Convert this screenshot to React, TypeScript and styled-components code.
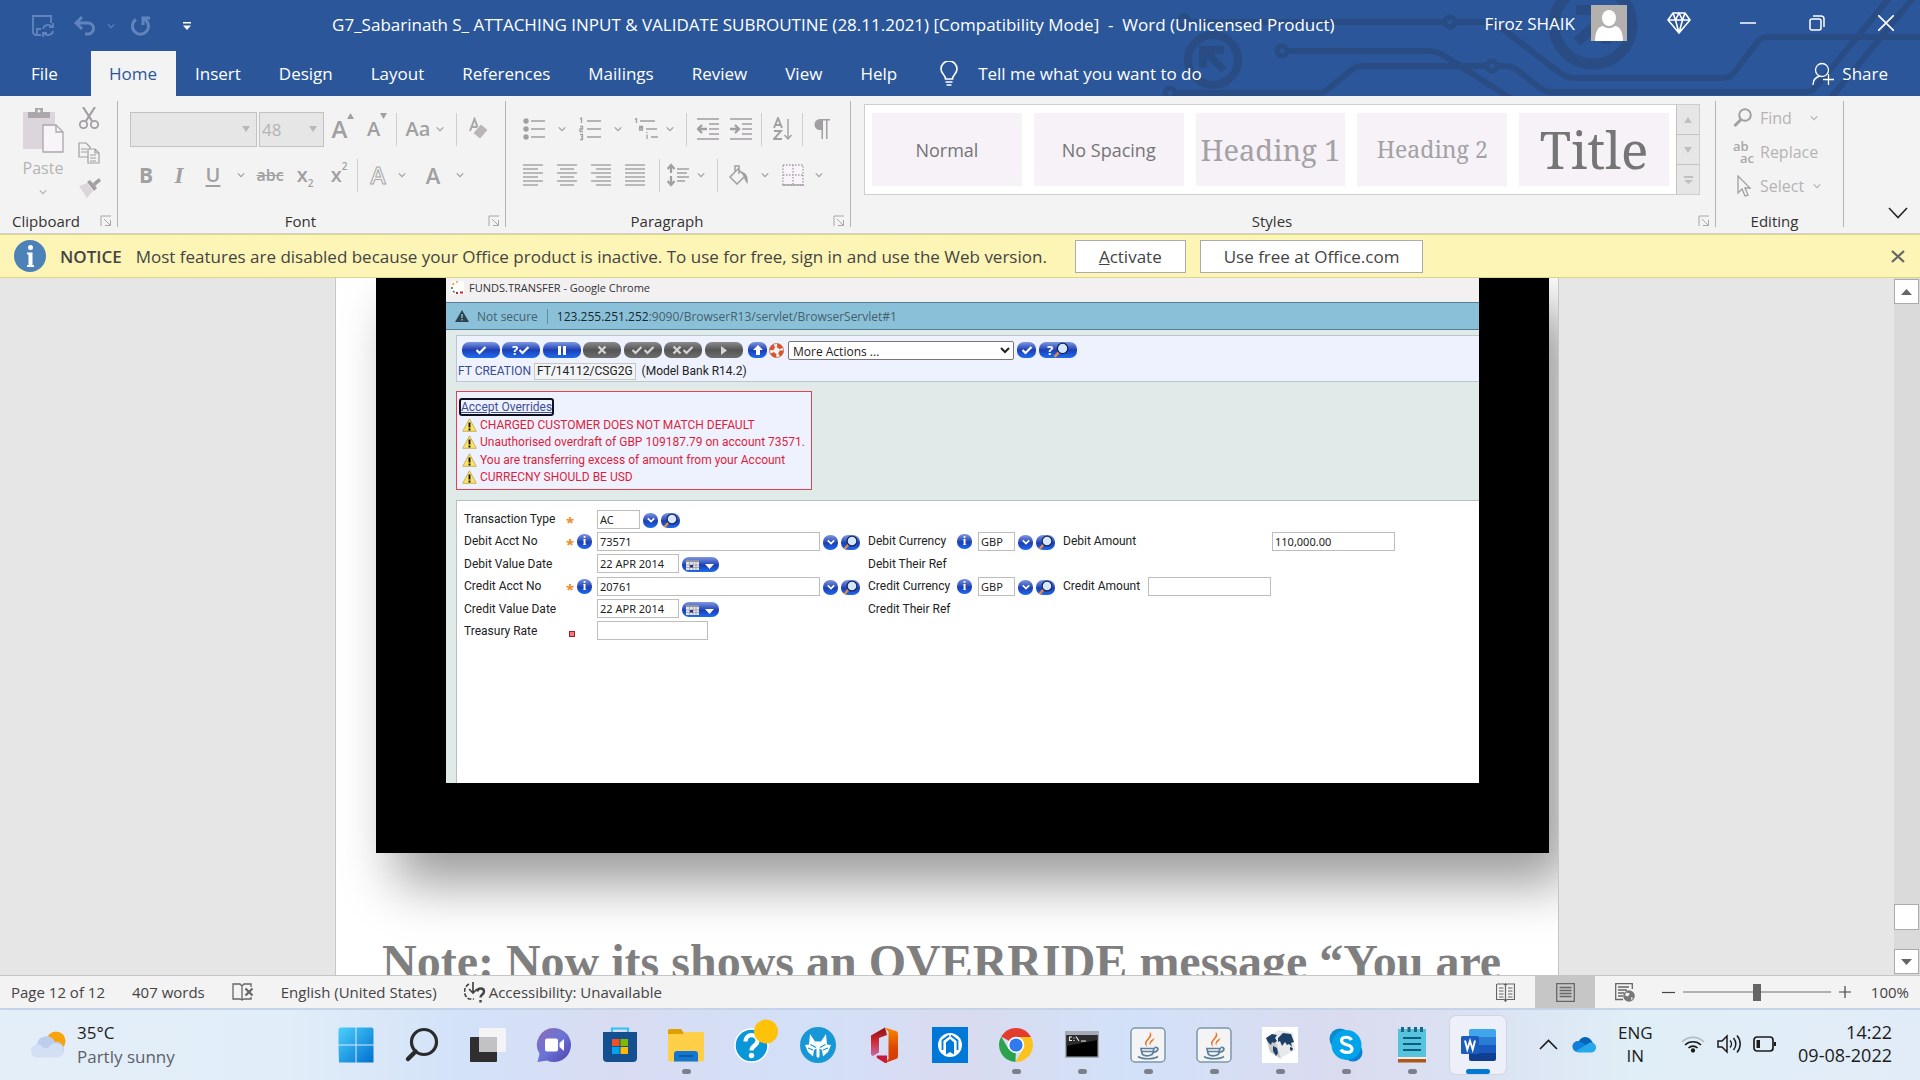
import React from "react";
import styled, { createGlobalStyle } from "styled-components";

const UI = `"Open Sans", "Noto Sans", sans-serif`;
const BANK = `Roboto, "Open Sans", sans-serif`;

const GlobalStyle = createGlobalStyle`
  *, *::before, *::after { box-sizing: border-box; }
  html, body { margin: 0; padding: 0; }
  body { font-family: ${UI}; color: #262626; overflow: hidden; }
  button, input, select { font: inherit; color: inherit; margin: 0; }
  button { border: 0; background: none; padding: 0; cursor: pointer; }
  svg { display: block; flex: none; }
`;

const Shell = styled.div`
  display: flex;
  flex-direction: column;
  height: 100vh;
`;

/* ---------- header ---------- */
const Header = styled.header`
  position: relative;
  flex: none;
  background: #2b579a;
  color: #fff;
  overflow: hidden;
`;
const Circuit = styled.svg`
  position: absolute;
  top: 0;
  right: 0;
`;
const TitleBar = styled.div`
  position: relative;
  display: flex;
  height: 51px;
`;
const QuickAccess = styled.div`
  display: flex;
  align-items: center;
  width: 202px;
  padding-left: 32px;
  color: #6284bd;
`;
const QuickButton = styled.button<{ $gap: number; $bright?: boolean }>`
  margin-right: ${(p) => p.$gap}px;
  color: ${(p) => (p.$bright ? "#fff" : "inherit")};
`;
const DocTitle = styled.h1`
  flex: 1;
  margin: 0;
  padding-right: 20px;
  font-size: 17px;
  font-weight: 400;
  line-height: 50px;
  text-align: center;
  white-space: pre;
`;
const Account = styled.div`
  display: flex;
  align-items: center;
  gap: 16px;
  height: 46px;
  margin-right: 17px;
  font-size: 17px;
`;
const WindowButtons = styled.div`
  display: flex;
  height: 46px;
`;
const WindowButton = styled.button`
  display: grid;
  place-items: center;
  width: 69px;
  color: #fff;
`;
const TabRow = styled.nav`
  position: relative;
  display: flex;
  height: 45px;
  font-size: 17px;
`;
const Tab = styled.button<{ $active?: boolean; $file?: boolean }>`
  padding: 0 ${(p) => (p.$file ? 33 : 19)}px 0 ${(p) => (p.$file ? 31 : p.$active ? 18 : 19)}px;
  background: ${(p) => (p.$active ? "#f3f3f3" : "transparent")};
  color: ${(p) => (p.$active ? "#2b579a" : "#fff")};
`;
const TellMe = styled.button`
  display: flex;
  align-items: center;
  gap: 20px;
  margin-left: 24px;
  color: #fff;
`;
const Share = styled(TellMe)`
  gap: 8px;
  margin: 0 32px 0 auto;
`;

/* ---------- ribbon ---------- */
const Ribbon = styled.section`
  display: flex;
  flex: none;
  height: 138px;
  padding: 5px 0 6px;
  background: #f3f3f3;
  border-bottom: 1px solid #d2d0d0;
  color: #a19fa1;
`;
const Group = styled.div<{ $width?: number }>`
  display: flex;
  flex-direction: column;
  flex: ${(p) => (p.$width ? "none" : "1")};
  width: ${(p) => (p.$width ? `${p.$width}px` : "auto")};
  border-right: 1px solid #b5b3b3;
`;
const GroupBody = styled.div<{ $pad?: string }>`
  flex: 1;
  padding: ${(p) => p.$pad ?? "0"};
`;
const GroupFoot = styled.div`
  display: flex;
  align-items: center;
  height: 20px;
  margin-bottom: -4px;
  padding-right: 5px;
  font-size: 15px;
  color: #333;
`;
const GroupLabel = styled.span<{ $left?: boolean }>`
  flex: 1;
  padding: ${(p) => (p.$left ? "0 0 0 12px" : "0 5px 0 0")};
  text-align: ${(p) => (p.$left ? "left" : "center")};
`;
const ToolRow = styled.div<{ $gap?: number }>`
  display: flex;
  align-items: center;
  height: 34px;
  margin-bottom: ${(p) => p.$gap ?? 0}px;
`;
const Tool = styled.button<{ $w: number; $start?: boolean }>`
  display: flex;
  align-items: center;
  justify-content: ${(p) => (p.$start ? "flex-start" : "center")};
  flex: none;
  width: ${(p) => p.$w}px;
  height: 32px;
`;
const Divider = styled.span<{ $l: number; $r: number }>`
  flex: none;
  width: 1px;
  height: 33px;
  margin: 0 ${(p) => p.$r}px 0 ${(p) => p.$l}px;
  background: #cfcdcd;
`;
const Combo = styled.div<{ $w: number }>`
  display: flex;
  align-items: center;
  width: ${(p) => p.$w}px;
  height: 35px;
  margin-right: 2px;
  padding-right: 6px;
  background: #e6e6e6;
  border: 1px solid #c3c1c1;
  color: #b9b7b9;
`;
const ComboInput = styled.input`
  flex: 1;
  min-width: 0;
  padding: 0 0 0 2px;
  border: 0;
  outline: 0;
  background: none;
  font-size: 17px;
  color: #b5b3b3;
`;
const Glyph = styled.span<{ $size: number; $bold?: boolean; $italic?: boolean; $under?: boolean; $strike?: boolean; $serif?: boolean; $hollow?: boolean }>`
  font-family: ${(p) => (p.$serif ? `"Liberation Serif", serif` : UI)};
  font-size: ${(p) => p.$size}px;
  line-height: 1;
  font-weight: ${(p) => (p.$bold ? 700 : 600)};
  font-style: ${(p) => (p.$italic ? "italic" : "normal")};
  text-decoration: ${(p) => (p.$under ? "underline" : p.$strike ? "line-through" : "none")};
  text-underline-offset: 3px;
  -webkit-text-stroke: ${(p) => (p.$hollow ? "1px #a9a7a9" : "0")};
  color: ${(p) => (p.$hollow ? "#f3f3f3" : "inherit")};
`;
const Small = styled.span<{ $up?: boolean }>`
  align-self: ${(p) => (p.$up ? "flex-start" : "flex-end")};
  margin-bottom: ${(p) => (p.$up ? 0 : 1)}px;
  font-size: 10px;
  line-height: 14px;
  font-weight: 600;
`;
const ClipBody = styled.div`
  display: flex;
  flex: 1;
  padding: 6px 0 0 20px;
`;
const PasteButton = styled.button`
  display: flex;
  flex-direction: column;
  align-items: center;
  width: 46px;
  margin-right: 12px;
  font-size: 16px;
  line-height: 24px;
  color: #b5b3b3;
`;
const PasteLabel = styled.span`
  margin: 3px 0 8px;
`;
const ClipTools = styled.div`
  display: flex;
  flex-direction: column;
  gap: 13px;
`;
const Gallery = styled.div`
  display: flex;
  height: 91px;
  margin: 3px 15px 0 13px;
  background: #fff;
  border: 1px solid #cfcdcd;
`;
const Cards = styled.div`
  display: flex;
  flex: 1;
  gap: 12px;
  padding: 8px 7px;
`;
const Card = styled.button<{ $size: number; $serif?: boolean; $dark?: boolean }>`
  flex: 1;
  min-width: 0;
  background: #f6f2f8;
  font-family: ${(p) => (p.$serif ? `"Noto Serif", "DejaVu Serif Condensed", "Liberation Serif", serif` : UI)};
  font-size: ${(p) => p.$size}px;
  line-height: 1;
  white-space: nowrap;
  color: ${(p) => (p.$dark ? "#757575" : "#a3a1a3")};
`;
const GalleryScroll = styled.div`
  display: flex;
  flex-direction: column;
  width: 23px;
  border-left: 1px solid #c3c1c1;
`;
const ScrollStep = styled.button`
  flex: 1;
  display: grid;
  place-items: center;
  background: #e6e6e6;
  color: #c0bebe;
  & + & { border-top: 1px solid #c3c1c1; }
`;
const EditRow = styled.button`
  display: grid;
  grid-template-columns: 27px auto auto;
  align-items: center;
  justify-content: start;
  width: 100%;
  height: 34px;
  font-size: 16px;
  color: #b5b3b3;
  text-align: left;
`;
const EditText = styled.span<{ $w?: number }>`
  min-width: ${(p) => p.$w ?? 0}px;
`;
const SwapGlyph = styled.span`
  display: flex;
  flex-direction: column;
  font-size: 13px;
  font-weight: 600;
  line-height: 12px;
  color: #a9a7a9;
`;
const SwapLine = styled.span<{ $in?: boolean }>`
  padding-left: ${(p) => (p.$in ? 7 : 0)}px;
`;
const RibbonEnd = styled.div`
  display: flex;
  align-items: flex-end;
  justify-content: flex-end;
  width: 76px;
  padding: 0 12px 8px 0;
  color: #262626;
`;

/* ---------- notice ---------- */
const Notice = styled.section`
  display: flex;
  align-items: center;
  flex: none;
  height: 44px;
  padding: 0 15px 0 14px;
  background: #fcf5b5;
  border-top: 1px solid #dcd68c;
  border-bottom: 1px solid #dcd68c;
  font-size: 17px;
  color: #444;
`;
const NoticeTitle = styled.strong`
  margin: 0 14px;
  font-weight: 600;
`;
const NoticeText = styled.span`
  margin-right: 28px;
`;
const NoticeButton = styled.button`
  height: 33px;
  margin-right: 14px;
  padding: 0 23px;
  background: #fff;
  border: 1px solid #ababab;
  white-space: nowrap;
`;
const NoticeClose = styled.button`
  margin-left: auto;
  color: #666;
`;

/* ---------- document ---------- */
const Workspace = styled.main`
  display: flex;
  flex: 1;
  min-height: 0;
  background: #e6e6e6;
`;
const Canvas = styled.div`
  display: flex;
  justify-content: center;
  flex: 1;
  min-width: 0;
  overflow: hidden;
`;
const Sheet = styled.article`
  flex: none;
  width: 1224px;
  padding-left: 40px;
  background: #fff;
  border: solid #c6c6c6;
  border-width: 0 1px;
  overflow: hidden;
`;
const Picture = styled.div`
  width: 1173px;
  padding: 0 70px 70px;
  background: #000;
  box-shadow: 20px 30px 50px rgba(0, 0, 0, 0.4);
`;
const NoteText = styled.p`
  margin: 81px 0 0 6px;
  font-family: "Liberation Serif", "Times New Roman", serif;
  font-size: 48px;
  font-weight: 700;
  line-height: 56px;
  color: #7f7f7f;
  white-space: nowrap;
`;
const ScrollTrack = styled.div`
  display: flex;
  flex-direction: column;
  width: 26px;
  padding: 1px 1px 1px 0;
  background: #dadada;
`;
const TrackButton = styled.button`
  display: grid;
  place-items: center;
  height: 25px;
  background: #fff;
  border: 1px solid #ababab;
  color: #666;
`;
const TrackSpace = styled.div`
  flex: 1;
`;
const Thumb = styled.div`
  height: 26px;
  margin-bottom: 19px;
  background: #fff;
  border: 1px solid #ababab;
`;

/* ---------- banking window ---------- */
const Browser = styled.div`
  height: 505px;
  display: flex;
  flex-direction: column;
  background: #e0eae8;
  font-family: ${BANK};
  font-size: 12px;
  color: #222;
  white-space: nowrap;
`;
const BrowserTitle = styled.div`
  display: flex;
  align-items: center;
  gap: 5px;
  height: 24px;
  padding: 0 0 6px 5px;
  background: #f2f0f0;
  font-family: ${UI};
  font-size: 11px;
  color: #333;
`;
const AddressBar = styled.div`
  display: flex;
  align-items: center;
  height: 28px;
  padding-left: 9px;
  background: #8bc1d8;
  border: solid #517f97;
  border-width: 1px 0;
  font-family: ${UI};
  font-size: 12px;
  color: #44606d;
`;
const Secure = styled.span`
  margin-left: 8px;
  padding-right: 9px;
  border-right: 1px solid #5f8ea4;
  line-height: 15px;
`;
const Url = styled.span`
  margin-left: 9px;
`;
const UrlHost = styled.span`
  color: #16262e;
`;
const ActionPanel = styled.div`
  margin: 5px 0 0 10px;
  height: 47px;
  padding: 4px 0 0 5px;
  background: #eef2ff;
  border: 1px solid #bcc6ce;
  border-right: 0;
`;
const ActionRow = styled.div`
  display: flex;
  align-items: center;
  height: 20px;
`;
const Pill = styled.button<{ $w: number; $grey?: boolean; $gap?: number }>`
  display: flex;
  align-items: center;
  justify-content: center;
  flex: none;
  width: ${(p) => p.$w}px;
  height: 16px;
  margin-right: ${(p) => p.$gap ?? 2}px;
  border-radius: 7px;
  background: ${(p) =>
    p.$grey
      ? "linear-gradient(#8b8b8b, #555 50%, #6e6e6e)"
      : "linear-gradient(#7f97e0, #1c3fb4 50%, #1f6cf0)"};
  color: ${(p) => (p.$grey ? "#d5d5d5" : "#fff")};
`;
const Actions = styled.select`
  width: 226px;
  height: 19px;
  margin: 0 3px 0 4px;
  padding: 0;
  background: #fff;
  border: 1px solid #767676;
  border-radius: 2px;
  font-family: ${UI};
  font-size: 12px;
  line-height: 16px;
`;
const RecordRow = styled.div`
  display: flex;
  align-items: center;
  height: 18px;
  margin: 2px 0 0 -4px;
`;
const RecordType = styled.span`
  width: 76px;
  color: #3b4d8c;
`;
const RecordId = styled.span`
  margin-right: 6px;
  padding: 0 2px;
  line-height: 15px;
  border: 1px solid #c8c8c0;
  background: #f3f4f6;
`;
const Overrides = styled.div`
  align-self: flex-start;
  width: 356px;
  height: 99px;
  margin: 9px 0 10px 10px;
  padding: 6px 0 0 2px;
  background: #eef2ff;
  border: 1px solid #e04450;
  color: #dc1f3c;
`;
const AcceptLink = styled.a`
  display: block;
  width: fit-content;
  border: 2px solid #101020;
  border-radius: 3px;
  line-height: 14px;
  color: #3d4f94;
`;
const WarnList = styled.ul`
  display: flex;
  flex-direction: column;
  justify-content: space-between;
  height: 70px;
  margin: 0;
  padding: 0 0 0 3px;
  list-style: none;
`;
const WarnItem = styled.li`
  display: flex;
  align-items: center;
  gap: 3px;
  height: 17px;
`;
const FormPanel = styled.form`
  flex: 1;
  margin-left: 10px;
  padding: 7px 0 0 7px;
  background: #fff;
  border: solid #b6bebe;
  border-width: 1px 0 0 1px;
`;
const FormRows = styled.div`
  display: flex;
  flex-direction: column;
  justify-content: space-between;
  height: 134px;
`;
const FormRow = styled.div`
  display: flex;
  height: 22px;
  align-items: center;
`;
const Cell = styled.span<{ $w: number }>`
  display: flex;
  align-items: center;
  flex: none;
  gap: 3px;
  width: ${(p) => p.$w}px;
`;
const FieldLabel = styled.label<{ $w: number }>`
  flex: none;
  width: ${(p) => p.$w}px;
`;
const Field = styled.input<{ $w: number; $indent?: number }>`
  flex: none;
  width: ${(p) => p.$w}px;
  height: 19px;
  margin-left: ${(p) => p.$indent ?? 0}px;
  padding: 0 2px;
  border: 1px solid #bdbdbd;
  background: #fff;
  font-family: "Noto Sans", sans-serif;
  font-size: 11px;
`;
const Star = styled.span`
  width: 8px;
  padding-top: 5px;
  font-family: ${UI};
  font-weight: 700;
  font-size: 15px;
  line-height: 12px;
  color: #f08a1c;
`;
const RequiredDot = styled.span`
  width: 6px;
  height: 6px;
  margin: 6px 0 0 3px;
  border: 1px solid #a61c24;
  background: #f27a80;
`;
const RoundButton = styled.button<{ $w?: number }>`
  display: grid;
  place-items: center;
  flex: none;
  width: ${(p) => p.$w ?? 15}px;
  height: 15px;
  margin-top: 2px;
  border-radius: 7px;
  background: linear-gradient(#7f97e0, #1c3fb4 55%, #1f6cf0);
  color: #fff;
`;
const Info = styled(RoundButton)`
  margin-top: 0;
  font: 700 12px "Liberation Serif", serif;
`;

/* ---------- status bar ---------- */
const StatusBar = styled.footer`
  display: flex;
  align-items: center;
  flex: none;
  height: 33px;
  padding: 0 11px;
  background: #f3f3f3;
  border-top: 1px solid #c6c6c6;
  font-size: 15px;
  color: #444;
  white-space: nowrap;
`;
const StatusItem = styled.button`
  display: flex;
  align-items: center;
  gap: 3px;
  margin-right: 27px;
`;
const StatusRight = styled.div`
  display: flex;
  align-items: center;
  align-self: stretch;
  margin-left: auto;
`;
const ViewButton = styled.button<{ $active?: boolean }>`
  display: grid;
  place-items: center;
  width: 60px;
  height: 32px;
  background: ${(p) => (p.$active ? "#c6c6c6" : "transparent")};
  color: #666;
`;
const ZoomSlider = styled.input`
  appearance: none;
  width: 148px;
  height: 18px;
  margin: 0 8px;
  background: linear-gradient(#b0b0b0, #b0b0b0) center / 100% 2px no-repeat;
  &::-webkit-slider-thumb {
    appearance: none;
    width: 8px;
    height: 17px;
    background: #666;
  }
`;
const ZoomButton = styled.button<{ $l?: number }>`
  margin-left: ${(p) => p.$l ?? 0}px;
`;
const ZoomValue = styled.span`
  width: 58px;
  text-align: right;
`;

/* ---------- taskbar ---------- */
const Taskbar = styled.nav`
  display: grid;
  grid-template-columns: 323px 1fr 409px;
  flex: none;
  height: 72px;
  border-top: 2px solid #c5d3e8;
  background: linear-gradient(90deg, #e3eef8 0, #e1edf8 15%, #d3e2f9 24%, #d8dcf2 32%, #d3e0f8 42%, #d9dbf0 50%, #d2e1f8 59%, #dadbef 70%, #dbe3f3 78%, #e0eef7 85%, #e2ecf8 100%);
  color: #1c1c1c;
`;
const Weather = styled.button`
  display: flex;
  align-items: center;
  gap: 11px;
  padding: 0 0 0 30px;
  text-align: left;
  font-size: 17px;
  line-height: 24px;
`;
const Muted = styled.span`
  display: block;
  color: #5d6166;
`;
const Apps = styled.div`
  display: flex;
  justify-content: center;
`;
const AppSlot = styled.button<{ $active?: boolean }>`
  display: flex;
  flex-direction: column;
  align-items: center;
  justify-content: space-between;
  width: 56px;
  height: 58px;
  margin: 6px 5px 0;
  padding-top: 11px;
  border-radius: 6px;
  background: ${(p) => (p.$active ? "#eef0f9" : "transparent")};
  box-shadow: ${(p) => (p.$active ? "0 0 0 1px #d0d5e4" : "none")};
`;
const AppIcon = styled.span`
  display: grid;
  place-items: center;
  width: 36px;
  height: 36px;
`;
const HelpArt = styled.svg`
  overflow: visible;
`;
const Running = styled.span<{ $on?: boolean; $active?: boolean }>`
  width: ${(p) => (p.$active ? 24 : 9)}px;
  height: 5px;
  border-radius: 3px;
  background: ${(p) => (p.$active ? "#0078d4" : p.$on ? "#7c808c" : "transparent")};
`;
const Tray = styled.div`
  display: flex;
  align-items: center;
  padding: 0 28px 2px 0;
  font-size: 17px;
  line-height: 23px;
`;
const TrayItem = styled.button<{ $l: number }>`
  margin-left: ${(p) => p.$l}px;
  text-align: center;
`;
const Clock = styled.button`
  margin-left: auto;
  font-size: 18px;
  text-align: right;
`;

/* ---------- icons ---------- */
const Chev = ({ s = 9, w = 1.5 }: { s?: number; w?: number }) => (
  <svg width={s} height={s} viewBox="0 0 10 10" fill="none" stroke="currentColor" strokeWidth={w}>
    <path d="M1 3l4 4 4-4" />
  </svg>
);
const Tri = ({ up, w = 9 }: { up?: boolean; w?: number }) => (
  <svg width={w} height="6" viewBox="0 0 10 6" preserveAspectRatio="none" fill="currentColor">
    <path d={up ? "M0 6L5 0l5 6z" : "M0 0l5 6 5-6z"} />
  </svg>
);
const Lines = ({ rows, w = 21, h = 22 }: { rows: [number, number, number][]; w?: number; h?: number }) => (
  <svg width={w} height={h} viewBox={`0 0 ${w} ${h}`} stroke="currentColor" strokeWidth="1.4">
    {rows.map(([y, a, b], i) => (
      <path key={i} d={`M${a} ${y}H${b}`} />
    ))}
  </svg>
);
const alignRows = (kind: string): [number, number, number][] =>
  [1, 5, 9, 13, 17, 21].map((y, i) => {
    const short = i % 2 === 1;
    if (kind === "j" || !short) return [y, 0, 20];
    if (kind === "l") return [y, 0, 15];
    if (kind === "c") return [y, 3, 17];
    return [y, 5, 20];
  });
const Launcher = () => (
  <svg width="12" height="12" viewBox="0 0 12 12" fill="none" stroke="#a8a6a6">
    <path d="M1 11V1h10M4 4l6 6M10.500 5v5.500H5" />
  </svg>
);
const Foot = ({ children, left }: { children: string; left?: boolean }) => (
  <GroupFoot>
    <GroupLabel $left={left}>{children}</GroupLabel>
    <button aria-label={`${children} settings`}>
      <Launcher />
    </button>
  </GroupFoot>
);
const Check = () => (
  <svg width="12" height="10" viewBox="0 0 12 10" fill="none" stroke="currentColor" strokeWidth="2.200">
    <path d="M1.500 5l3 3L10.500 2" />
  </svg>
);
const Cross = () => (
  <svg width="10" height="10" viewBox="0 0 10 10" fill="none" stroke="currentColor" strokeWidth="2.200">
    <path d="M1.500 1.500l7 7M8.500 1.500l-7 7" />
  </svg>
);
const Query = styled.span`
  font: 700 13px ${UI};
  line-height: 14px;
`;
const Lens = ({ s = 15 }: { s?: number }) => (
  <svg width={s} height={s} viewBox="0 0 15 15">
    <path d="M6 9L1.500 14" stroke="#e08b4a" strokeWidth="2.500" />
    <circle cx="9" cy="6" r="4.900" fill="#d6e7fc" stroke="#10235c" strokeWidth="1.200" />
  </svg>
);
const DownRound = () => (
  <RoundButton type="button" aria-label="Open list">
    <Chev s={8} w={2} />
  </RoundButton>
);
const LensRound = () => (
  <RoundButton type="button" $w={19} aria-label="Search">
    <Lens />
  </RoundButton>
);
const CalendarRound = () => (
  <RoundButton type="button" $w={37} aria-label="Pick date">
    <svg width="31" height="12" viewBox="0 0 31 12">
      <path d="M1 1h13v10H1z" fill="#e6e6e6" />
      <path d="M1 1h13v2H1z" fill="#8e94a5" />
      <path d="M4.500 3v8M8 3v8M11 3v8M1 6h13M1 8.500h13" stroke="#9a9aa4" strokeWidth=".8" />
      <path d="M5 6h3v2.500H5z" fill="#24368c" />
      <path d="M20 5h9l-4.500 5z" fill="#fff" />
    </svg>
  </RoundButton>
);
const Warn = () => (
  <svg width="15" height="14" viewBox="0 0 15 14">
    <path d="M7.500 .8L14.300 13.300H.7z" fill="#fbe36a" stroke="#c9b25a" />
    <path d="M7.500 4.500v5M7.500 10.500v2" stroke="#111" strokeWidth="1.900" />
  </svg>
);

const CircuitArt = () => (
  <Circuit width="760" height="96" viewBox="1160 0 760 96" fill="none" stroke="#294c85" strokeWidth="6" aria-hidden="true">
    <path d="M1190 22H1443M1457 22H1482Q1496 22 1508 33L1556 70Q1566 78 1574 78H1722Q1731 78 1736 70L1756 44Q1760 37 1768 37H1920" />
    <path d="M1289 51H1428Q1438 51 1446 57L1512 99" />
    <path d="M1177 93H1318Q1325 93 1332 86L1350 71Q1356 66 1362 66H1485M1499 66H1506Q1514 66 1521 73L1540 88Q1546 92 1552 92H1806Q1812 92 1816 87L1890-3M1830 99L1918-8" />
    <g strokeWidth="5">
      <circle cx="1184" cy="21" r="5" />
      <circle cx="1450" cy="22" r="5" />
      <circle cx="1282" cy="51" r="5" />
      <circle cx="1492" cy="66" r="5" />
      <circle cx="1170" cy="93" r="5" />
    </g>
    <circle cx="1213" cy="60" r="25" strokeWidth="8" />
    <path d="M1224 50H1203V68M1205 51L1224 70" strokeWidth="8" />
    <circle cx="1593" cy="25" r="39" strokeWidth="11" />
    <path d="M1576 10H1612M1577 42L1610 12M1606 8V44" strokeWidth="10" />
  </Circuit>
);

const JavaIcon = () => (
  <svg width="36" height="36" viewBox="0 0 36 36">
    <rect x="1" y="1" width="34" height="34" rx="4" fill="#f4f4f4" stroke="#7b97ad" strokeWidth="1.500" />
    <path d="M17.500 20C10 14 22 12 19.500 4.500 26 11 13 13 17.500 20zM20.500 19c-3-4 1-6 4-8-1 4-5 4-4 8z" fill="#e8762c" />
    <path d="M11 21.500h13c-1 3-.5 4-2 6-3 1.500-7 1.500-9.500 0-1-2-1-4-1.500-6zM12 24.500h11" fill="none" stroke="#5d7f9c" strokeWidth="1.700" />
    <path d="M24.500 20.500c5-1 4.500 4-1.500 5M8 29.500c4 3 16 3 20 0" fill="none" stroke="#5d7f9c" strokeWidth="1.700" />
  </svg>
);

const apps: { name: string; on?: boolean; active?: boolean; icon: React.ReactNode }[] = [
  {
    name: "Start",
    icon: (
      <svg width="36" height="36" viewBox="0 0 36 36">
        <defs>
          <linearGradient id="win" x1="0" y1="0" x2="1" y2="1">
            <stop offset="0" stopColor="#4cd0fb" />
            <stop offset="1" stopColor="#0070d0" />
          </linearGradient>
        </defs>
        <path d="M2 .5h15.500v17H.5V2zM18.500.5H34L35.500 2v15.500h-17zM.5 18.500h17v17H1zM18.500 18.500h17V35l-.5.500H18.500z" fill="url(#win)" />
      </svg>
    ),
  },
  {
    name: "Search",
    icon: (
      <svg width="36" height="36" viewBox="0 0 36 36" fill="none" stroke="#2b2b2b">
        <circle cx="20" cy="15" r="12.500" strokeWidth="3.200" />
        <path d="M11.500 24.500L4 32" strokeWidth="4.500" strokeLinecap="round" />
      </svg>
    ),
  },
  {
    name: "Task view",
    icon: (
      <svg width="36" height="36" viewBox="0 0 36 36">
        <rect x="0" y="10" width="27" height="25" rx="1" fill="#2f2f2f" />
        <rect x="9" y="1" width="27" height="24" rx="1" fill="#f4f4f6" />
        <path d="M9 10h18v15H9z" fill="#c2c2c4" />
      </svg>
    ),
  },
  {
    name: "Chat",
    icon: (
      <svg width="36" height="36" viewBox="0 0 36 36">
        <defs>
          <linearGradient id="chat" x1="0" y1="0" x2="1" y2="1">
            <stop offset="0" stopColor="#8d6db4" />
            <stop offset=".5" stopColor="#6a74d6" />
            <stop offset="1" stopColor="#4b3fae" />
          </linearGradient>
        </defs>
        <path d="M18 1a17 17 0 1 1-7 32.500L1.500 35l2-8A17 17 0 0 1 18 1z" fill="url(#chat)" />
        <rect x="9" y="11.500" width="13" height="13" rx="2" fill="#fff" />
        <path d="M23.500 16l4.500-4v12l-4.500-4z" fill="#fff" />
      </svg>
    ),
  },
  {
    name: "Store",
    icon: (
      <svg width="36" height="36" viewBox="0 0 36 36">
        <path d="M10 7V1.500h16V7" fill="none" stroke="#35c0f2" strokeWidth="2.200" />
        <path d="M1 5h34v26a4 4 0 0 1-4 4H5a4 4 0 0 1-4-4z" fill="#14508f" />
        <path d="M10 12h7.500v7H10z" fill="#f25022" />
        <path d="M18.500 12H26v7h-7.500z" fill="#7fba00" />
        <path d="M10 20h7.500v7H10z" fill="#00a4ef" />
        <path d="M18.500 20H26v7h-7.500z" fill="#ffb900" />
      </svg>
    ),
  },
  {
    name: "File Explorer",
    on: true,
    icon: (
      <svg width="36" height="36" viewBox="0 0 36 36">
        <path d="M0 3.500A1.500 1.500 0 0 1 1.500 2H13l3 4-3 4H0z" fill="#e0a000" />
        <path d="M0 7h15l2-2h19v28a1.500 1.500 0 0 1-1.500 1.500h-33A1.500 1.500 0 0 1 0 33z" fill="#ffcf48" />
        <path d="M6 34.500V27a3 3 0 0 1 3-3h18a3 3 0 0 1 3 3v7.500z" fill="#1377d2" />
        <path d="M11 29h14" stroke="#0b4f95" strokeWidth="1.500" />
      </svg>
    ),
  },
  {
    name: "Get Help",
    icon: (
      <HelpArt width="36" height="36" viewBox="0 0 36 36">
        <circle cx="17.500" cy="18.500" r="16.500" fill="#0a97d9" stroke="#fff" strokeWidth="1.500" />
        <path d="M11.500 14.500c0-8.500 12-8 12-1 0 5.500-6 5-6 10" fill="none" stroke="#fff" strokeWidth="4.200" />
        <circle cx="17.500" cy="28.500" r="2.700" fill="#fff" />
        <circle cx="32" cy="4.500" r="12" fill="#ffc20a" />
      </HelpArt>
    ),
  },
  {
    name: "Wolf",
    icon: (
      <svg width="36" height="36" viewBox="0 0 36 36">
        <circle cx="18" cy="18" r="18" fill="#1797d6" />
        <path d="M10 7l5 7.500h6L26 7l1 10.500 4 .5-3 7-5 4.500-1-6.500-2.500-1.500v8L18 31l-1.500-1.500v-8L14 23l-1 6.500L8 25l-3-7 4-.5z" fill="#fff" />
        <path d="M8 21l5 2M28 21l-5 2M10.500 17.500l5.500 3M25.500 17.500l-5.500 3" stroke="#1797d6" strokeWidth="1.200" />
      </svg>
    ),
  },
  {
    name: "Office",
    icon: (
      <svg width="36" height="36" viewBox="0 0 36 36">
        <defs>
          <linearGradient id="offl" x1="0" y1="0" x2="0" y2="1">
            <stop offset="0" stopColor="#8c0f12" />
            <stop offset=".5" stopColor="#cf2a36" />
            <stop offset="1" stopColor="#c56aa6" />
          </linearGradient>
          <linearGradient id="offr" x1="0" y1="0" x2="0" y2="1">
            <stop offset="0" stopColor="#f78a00" />
            <stop offset=".6" stopColor="#dc4400" />
            <stop offset="1" stopColor="#d33c0a" />
          </linearGradient>
        </defs>
        <path d="M5 8.500L19 .5l2 7.500-8 3v14.500L7 29q-2-.5-2-2z" fill="url(#offl)" />
        <path d="M11 28.500h10V36h-2l-8-5q-1-1.500 0-2.500z" fill="#c8193c" />
        <path d="M19 .5l11 3.500q2 .5 2 2.500v23q0 2-2 2.500L19 36l3.500-4V5z" fill="url(#offr)" />
      </svg>
    ),
  },
  {
    name: "Support",
    icon: (
      <svg width="36" height="36" viewBox="0 0 36 36">
        <path d="M0 0h36v36H0z" fill="#0078d7" />
        <circle cx="18" cy="18" r="12" fill="#fff" />
        <path d="M14 27.500V15.500L18 12l4 3.500v12L18 25z" fill="#0078d7" />
        <path d="M10.500 23V13.500L17 8.500M25.500 23V13.500L19 8.500" fill="none" stroke="#0078d7" strokeWidth="1.800" />
      </svg>
    ),
  },
  {
    name: "Chrome",
    on: true,
    icon: (
      <svg width="36" height="36" viewBox="0 0 36 36">
        <path d="M18 18L3.300 9.500A17 17 0 0 1 32.700 9.500z" fill="#e33b2e" />
        <path d="M18 18l-.5 17A17 17 0 0 1 3.300 9.500l7.300 12.700z" fill="#2ba24c" />
        <path d="M18 10h14.900A17 17 0 0 1 17.500 35l7.500-13z" fill="#fcc31e" />
        <path d="M3.300 9.500L18 10h14.900l-.2-.5" fill="#e33b2e" />
        <circle cx="18" cy="18" r="8.300" fill="#fff" />
        <circle cx="18" cy="18" r="6.600" fill="#2f7bee" />
      </svg>
    ),
  },
  {
    name: "Command Prompt",
    on: true,
    icon: (
      <svg width="36" height="36" viewBox="0 0 36 36">
        <path d="M1 4h34v27H1z" fill="#a4acb8" />
        <path d="M2.500 8h31v21.500h-31z" fill="#000" />
        <path d="M2.500 8h31v5L2.500 19z" fill="#2c2c2c" />
        <path d="M8 10H5.500v3.500H8M10 10.500v1M10 13v1M12 9.500l3 4.500M17 14h5" fill="none" stroke="#eee" strokeWidth="1.100" />
      </svg>
    ),
  },
  { name: "Java", on: true, icon: <JavaIcon /> },
  { name: "Java", on: true, icon: <JavaIcon /> },
  {
    name: "Globe",
    on: true,
    icon: (
      <svg width="36" height="36" viewBox="0 0 36 36">
        <path d="M0 0h36v36H0z" fill="#fff" />
        <path d="M4 11L17 3l14 3 2 17-14 8z" fill="#e9e9eb" />
        <path d="M4 11l10 4 5 17L8 25z" fill="#c9c9cc" />
        <path d="M4 11l6-4 5 1-2 3 2 3-3 2-2-1-1 3-3-3zM16 11l5-5 8 1 3 8-3 1 1 4-3-3-2 1-2-3-3 4-2-5-2 1zM11 19l4 2 1 5-2 3-3-5zM28 20l3 1-1 3-2-1z" fill="#1d4067" />
      </svg>
    ),
  },
  {
    name: "Skype",
    on: true,
    icon: (
      <svg width="36" height="36" viewBox="0 0 36 36">
        <circle cx="12" cy="12" r="10.500" fill="#0b8ad0" />
        <circle cx="25" cy="25" r="9.500" fill="#0a7fd8" />
        <circle cx="18.500" cy="18" r="15" fill="#00a4ea" />
        <path d="M23.500 13c-2-4-10-3.500-10 .5 0 5.500 10.500 3 10.500 8.500 0 4.500-9 4.500-11 .5" fill="none" stroke="#fff" strokeWidth="3.200" />
      </svg>
    ),
  },
  {
    name: "Notepad",
    on: true,
    icon: (
      <svg width="36" height="36" viewBox="0 0 36 36">
        <path d="M4 32h28v3.500H4z" fill="#b0561a" />
        <path d="M4 30h28v2H4z" fill="#f5ede4" />
        <path d="M4 2h28v28H4z" fill="#55c3dc" />
        <path d="M9 11h18M9 17h18M9 23h18" stroke="#0b5d80" strokeWidth="2" />
        <path d="M8.500 0v5M15 0v5M21.500 0v5M27.500 0v5" stroke="#1a6785" strokeWidth="3" />
      </svg>
    ),
  },
  {
    name: "Word",
    on: true,
    active: true,
    icon: (
      <svg width="36" height="36" viewBox="0 0 36 36">
        <path d="M9 4a2 2 0 0 1 2-2h23a2 2 0 0 1 2 2v6H9z" fill="#41a5ee" />
        <path d="M9 10h27v8H9z" fill="#2b7cd3" />
        <path d="M9 18h27v8H9z" fill="#185abd" />
        <path d="M9 26h27v6a2 2 0 0 1-2 2H11a2 2 0 0 1-2-2z" fill="#103f91" />
        <rect x="1" y="9" width="18" height="18" rx="1.500" fill="#1b5cbe" />
        <path d="M5 13.500l2.300 9 2.700-8.500 2.700 8.500 2.300-9" fill="none" stroke="#fff" strokeWidth="1.900" />
      </svg>
    ),
  },
];

const tabs = ["File", "Home", "Insert", "Design", "Layout", "References", "Mailings", "Review", "View", "Help"];
const warnings = [
  "CHARGED CUSTOMER DOES NOT MATCH DEFAULT",
  "Unauthorised overdraft of GBP 109187.79 on account 73571.",
  "You are transferring excess of amount from your Account",
  "CURRECNY SHOULD BE USD",
];

const InfoMark = () => (
  <Info type="button" aria-label="Information">
    i
  </Info>
);

const AccountRow = ({ side, account, amount, indent }: { side: string; account: string; amount: string; indent: number }) => (
  <FormRow>
    <FieldLabel $w={102} htmlFor={`${side}-acct`}>{`${side} Acct No`}</FieldLabel>
    <Cell $w={31}>
      <Star>*</Star>
      <InfoMark />
    </Cell>
    <Cell $w={271}>
      <Field id={`${side}-acct`} $w={223} defaultValue={account} />
      <DownRound />
      <LensRound />
    </Cell>
    <FieldLabel $w={89} htmlFor={`${side}-cur`}>{`${side} Currency`}</FieldLabel>
    <Cell $w={21}>
      <InfoMark />
    </Cell>
    <Cell $w={85}>
      <Field id={`${side}-cur`} $w={37} defaultValue="GBP" />
      <DownRound />
      <LensRound />
    </Cell>
    <FieldLabel $w={85} htmlFor={`${side}-amt`}>{`${side} Amount`}</FieldLabel>
    <Field id={`${side}-amt`} $w={123} $indent={indent} defaultValue={amount} />
  </FormRow>
);
const DateRow = ({ side }: { side: string }) => (
  <FormRow>
    <FieldLabel $w={133} htmlFor={`${side}-date`}>{`${side} Value Date`}</FieldLabel>
    <Cell $w={271}>
      <Field id={`${side}-date`} $w={82} defaultValue="22 APR 2014" />
      <CalendarRound />
    </Cell>
    <span>{`${side} Their Ref`}</span>
  </FormRow>
);

export default function App() {
  return (
    <Shell>
      <GlobalStyle />
      <Header>
        <CircuitArt />
        <TitleBar>
          <QuickAccess>
            <QuickButton $gap={20} aria-label="Save">
              <svg width="22" height="22" viewBox="0 0 22 22" fill="none" stroke="currentColor" strokeWidth="1.800">
                <path d="M9 20H3.500L1 18V1h18v7M5 20v-6h4" />
                <path d="M11 14a5 5 0 0 1 9-2M21 8v4h-4M21 16a5 5 0 0 1-9 2M11 22v-4h4" />
              </svg>
            </QuickButton>
            <QuickButton $gap={11} aria-label="Undo">
              <svg width="22" height="20" viewBox="0 0 22 20" fill="none" stroke="currentColor" strokeWidth="3">
                <path d="M2 7h12a5.500 5.500 0 0 1 0 11h-3M8 1L2 7l6 6" />
              </svg>
            </QuickButton>
            <QuickButton $gap={15} aria-label="Undo history">
              <Chev s={8} />
            </QuickButton>
            <QuickButton $gap={31} aria-label="Redo">
              <svg width="22" height="20" viewBox="0 0 22 20" fill="none" stroke="currentColor" strokeWidth="3">
                <path d="M6 3.500A8 8 0 1 0 14 3M13 9V2h7" />
              </svg>
            </QuickButton>
            <QuickButton $gap={0} $bright aria-label="Customize toolbar">
              <svg width="8" height="8" viewBox="0 0 8 8" fill="currentColor">
                <path d="M0 0h8v1.500H0zM0 3.500h8L4 8z" />
              </svg>
            </QuickButton>
          </QuickAccess>
          <DocTitle>{"G7_Sabarinath S_ ATTACHING INPUT & VALIDATE SUBROUTINE (28.11.2021) [Compatibility Mode]  -  Word (Unlicensed Product)"}</DocTitle>
          <Account>
            <span>Firoz SHAIK</span>
            <svg width="36" height="36" viewBox="0 0 36 36">
              <path d="M0 0h36v36H0z" fill="#b3b0ad" />
              <ellipse cx="18" cy="13" rx="7" ry="8" fill="#fff" />
              <path d="M4 36c0-10 4-15 8-15 4 3 8 3 12 0 4 0 8 5 8 15z" fill="#fff" />
            </svg>
          </Account>
          <WindowButtons>
            <WindowButton aria-label="Premium">
              <svg width="24" height="22" viewBox="0 0 24 22" fill="none" stroke="currentColor" strokeWidth="1.600">
                <path d="M6 1h12l5 7-11 13L1 8zM1 8h22M6 1l2.500 7L12 21l3.500-13L18 1M8.500 8L12 1l3.500 7" />
              </svg>
            </WindowButton>
            <WindowButton aria-label="Minimize">
              <svg width="16" height="16" viewBox="0 0 16 16" stroke="currentColor" strokeWidth="1.500">
                <path d="M0 8h16" />
              </svg>
            </WindowButton>
            <WindowButton aria-label="Restore">
              <svg width="16" height="16" viewBox="0 0 16 16" fill="none" stroke="currentColor" strokeWidth="1.500">
                <rect x="1" y="4" width="11" height="11" rx="2" />
                <path d="M4 1h8a3 3 0 0 1 3 3v8" />
              </svg>
            </WindowButton>
            <WindowButton aria-label="Close">
              <svg width="16" height="16" viewBox="0 0 16 16" stroke="currentColor" strokeWidth="1.600">
                <path d="M0 0l16 16M16 0L0 16" />
              </svg>
            </WindowButton>
          </WindowButtons>
        </TitleBar>
        <TabRow>
          {tabs.map((t) => (
            <Tab key={t} $active={t === "Home"} $file={t === "File"}>
              {t}
            </Tab>
          ))}
          <TellMe>
            <svg width="18" height="25" viewBox="0 0 18 25" fill="none" stroke="currentColor" strokeWidth="1.600">
              <path d="M5.500 18c0-4-4.500-5-4.500-10a8 8 0 0 1 16 0c0 5-4.500 6-4.500 10zM5.500 21h7M6.500 24h5" />
            </svg>
            Tell me what you want to do
          </TellMe>
          <Share>
            <svg width="22" height="24" viewBox="0 0 22 24" fill="none" stroke="currentColor" strokeWidth="1.300">
              <circle cx="10" cy="8" r="6.500" />
              <path d="M1 23c0-6 3-8 7-9M16.500 12v11M11 17.500h11" />
            </svg>
            Share
          </Share>
        </TabRow>
      </Header>

      <Ribbon>
        <Group $width={118}>
          <ClipBody>
            <PasteButton>
              <svg width="42" height="46" viewBox="0 0 42 46">
                <path d="M1 5h32v37H1z" fill="#dcd6dc" />
                <path d="M6 11V5h7V1h8v4h7v6z" fill="#aaa8aa" />
                <circle cx="17" cy="4" r="1.500" fill="#f3f3f3" />
                <path d="M21 18h13l7 7v20H21z" fill="#f8f4fa" stroke="#aaa8aa" strokeWidth="1.300" />
                <path d="M34 18v7h7" fill="none" stroke="#aaa8aa" strokeWidth="1.300" />
              </svg>
              <PasteLabel>Paste</PasteLabel>
              <Chev s={8} />
            </PasteButton>
            <ClipTools>
              <button aria-label="Cut">
                <svg width="22" height="22" viewBox="0 0 22 22" fill="none" stroke="currentColor" strokeWidth="1.800">
                  <path d="M5 0l9 14M17 0L8 14" strokeWidth="2.200" />
                  <circle cx="5.500" cy="17.500" r="3.700" />
                  <circle cx="16.500" cy="17.500" r="3.700" />
                </svg>
              </button>
              <button aria-label="Copy">
                <svg width="22" height="22" viewBox="0 0 22 22" fill="#f3f3f3" stroke="currentColor" strokeWidth="1.200">
                  <path d="M1 1h7l4 4v10H1zM3 7h6M3 10h6" />
                  <path d="M10 7h7l4 4v10H10zM17 7v4h4M12 13h6M12 16h6M12 19h6" />
                </svg>
              </button>
              <button aria-label="Format painter">
                <svg width="24" height="22" viewBox="0 0 24 22">
                  <path d="M1 9l8-3 6 8-6 7z" fill="#dcd6dc" />
                  <path d="M9 5l3-2 7 8-3 3z" fill="currentColor" />
                  <path d="M15 6l6-5 2 3-6 5z" fill="currentColor" />
                </svg>
              </button>
            </ClipTools>
          </ClipBody>
          <Foot left>Clipboard</Foot>
        </Group>

        <Group $width={388}>
          <GroupBody $pad="11px 0 0 12px">
            <ToolRow $gap={12}>
              <Combo $w={127}>
                <ComboInput aria-label="Font" />
                <Tri w={8} />
              </Combo>
              <Combo $w={65}>
                <ComboInput aria-label="Font size" defaultValue="48" />
                <Tri w={8} />
              </Combo>
              <Tool $w={34} aria-label="Grow font">
                <Glyph $size={24}>A</Glyph>
                <Small $up><Tri up w={7} /></Small>
              </Tool>
              <Tool $w={34} aria-label="Shrink font">
                <Glyph $size={20}>A</Glyph>
                <Small $up><Tri w={7} /></Small>
              </Tool>
              <Divider $l={2} $r={8} />
              <Tool $w={26} aria-label="Change case">
                <Glyph $size={20}>Aa</Glyph>
              </Tool>
              <Tool $w={18} aria-label="Case options"><Chev s={8} /></Tool>
              <Divider $l={7} $r={12} />
              <Tool $w={20} aria-label="Clear formatting">
                <svg width="20" height="24" viewBox="0 0 20 24">
                  <path d="M1 14L5.500 2 10 14M2.500 10h6" fill="none" stroke="#a9a7a9" strokeWidth="2" />
                  <path d="M12 7l7 6-8 9-7-6z" fill="#b9b5b9" stroke="#f3f3f3" />
                </svg>
              </Tool>
            </ToolRow>
            <ToolRow>
              <Tool $w={32}><Glyph $size={21} $bold>B</Glyph></Tool>
              <Tool $w={34}><Glyph $size={23} $italic $bold $serif>I</Glyph></Tool>
              <Tool $w={34}><Glyph $size={20} $under>U</Glyph></Tool>
              <Tool $w={22} aria-label="Underline options"><Chev s={8} /></Tool>
              <Tool $w={36}><Glyph $size={16} $strike>abc</Glyph></Tool>
              <Tool $w={34} aria-label="Subscript"><Glyph $size={20}>x</Glyph><Small>2</Small></Tool>
              <Tool $w={34} aria-label="Superscript"><Glyph $size={20}>x</Glyph><Small $up>2</Small></Tool>
              <Divider $l={1} $r={8} />
              <Tool $w={24} aria-label="Text effects"><Glyph $size={23} $hollow>A</Glyph></Tool>
              <Tool $w={24} aria-label="Effect options"><Chev s={8} /></Tool>
              <Tool $w={38} aria-label="Font colour"><Glyph $size={22}>A</Glyph></Tool>
              <Tool $w={16} aria-label="Colour options"><Chev s={8} /></Tool>
            </ToolRow>
          </GroupBody>
          <Foot>Font</Foot>
        </Group>

        <Group $width={345}>
          <GroupBody $pad="11px 0 0 17px">
            <ToolRow $gap={12}>
              <Tool $w={23} $start aria-label="Bullets">
                <svg width="22" height="22" viewBox="0 0 22 22" fill="currentColor" stroke="currentColor" strokeWidth="1.400">
                  <circle cx="3" cy="3" r="2" /><circle cx="3" cy="11" r="2" /><circle cx="3" cy="19" r="2" />
                  <path d="M8 3h14M8 11h14M8 19h14" />
                </svg>
              </Tool>
              <Tool $w={32} aria-label="Bullet options"><Chev s={8} /></Tool>
              <Tool $w={24} aria-label="Numbering">
                <svg width="22" height="24" viewBox="0 0 22 24" fill="none" stroke="currentColor" strokeWidth="1.300">
                  <path d="M8 4h14M8 12h14M8 20h14M1 2l1.500-1V6M1 9.500h2.500V12H1v2.500h3M1 17.500h2.500V20H2M3.500 20v2.500H1" />
                </svg>
              </Tool>
              <Tool $w={32} aria-label="Numbering options"><Chev s={8} /></Tool>
              <Tool $w={24} aria-label="Multilevel list">
                <svg width="24" height="22" viewBox="0 0 24 22" fill="none" stroke="currentColor" strokeWidth="1.300">
                  <path d="M1 1.500L2.500.5V5M6 3h15M5 8.500h3.500V12H5.500v-2h3M12 11h11M13 14v1M13 16.500V21M17 19h7" />
                </svg>
              </Tool>
              <Tool $w={24} aria-label="List options"><Chev s={8} /></Tool>
              <Divider $l={4} $r={8} />
              <Tool $w={26} aria-label="Decrease indent">
                <svg width="22" height="22" viewBox="0 0 22 22" fill="none" stroke="currentColor" strokeWidth="1.400">
                  <path d="M0 1h22M12 6h10M12 11h10M12 16h10M0 21h22" />
                  <path d="M10 11H1M5 7l-4 4 4 4" strokeWidth="2.400" />
                </svg>
              </Tool>
              <Tool $w={40} aria-label="Increase indent">
                <svg width="22" height="22" viewBox="0 0 22 22" fill="none" stroke="currentColor" strokeWidth="1.400">
                  <path d="M0 1h22M12 6h10M12 11h10M12 16h10M0 21h22" />
                  <path d="M0 11h9M5 7l4 4-4 4" strokeWidth="2.400" />
                </svg>
              </Tool>
              <Divider $l={0} $r={10} />
              <Tool $w={22} aria-label="Sort">
                <svg width="20" height="24" viewBox="0 0 20 24" fill="none" stroke="currentColor" strokeWidth="1.900">
                  <path d="M1 11L5 1l4 10M2.500 8h5M1 14h7L1 22h8" />
                  <path d="M15 2v20M11.500 18l3.500 4 3.500-4" strokeWidth="1.400" />
                </svg>
              </Tool>
              <Divider $l={8} $r={10} />
              <Tool $w={18} aria-label="Show marks">
                <svg width="16" height="20" viewBox="0 0 16 20" fill="currentColor">
                  <path d="M6 0h10v1.500h-2.500V20H12V1.500H9V20H7.500V11H6A5.500 5.500 0 0 1 6 0z" />
                </svg>
              </Tool>
            </ToolRow>
            <ToolRow>
              {["l", "c", "r", "j"].map((k) => (
                <Tool key={k} $w={34} $start aria-label={`Align ${k}`}>
                  <Lines rows={alignRows(k)} />
                </Tool>
              ))}
              <Divider $l={0} $r={7} />
              <Tool $w={22} aria-label="Line spacing">
                <svg width="22" height="24" viewBox="0 0 22 24" fill="none" stroke="currentColor" strokeWidth="1.400">
                  <path d="M10 6h12M10 10h10M10 14h12M10 18h8" />
                  <path d="M4 2v8M0.500 6L4 2l3.500 4M4 13v9M.5 18L4 22l3.500-4" strokeWidth="2.200" />
                </svg>
              </Tool>
              <Tool $w={24} aria-label="Spacing options"><Chev s={8} /></Tool>
              <Divider $l={4} $r={11} />
              <Tool $w={20} aria-label="Shading">
                <svg width="20" height="20" viewBox="0 0 20 20" fill="none" stroke="currentColor" strokeWidth="1.500">
                  <path d="M1 12l8-8 7 7-8 8zM6 6V1h4v8" />
                  <path d="M14 8c4 2 4 5 4 9-2-2-2-5-4-9z" fill="currentColor" />
                </svg>
              </Tool>
              <Tool $w={32} aria-label="Shading options"><Chev s={8} /></Tool>
              <Tool $w={24} aria-label="Borders">
                <svg width="22" height="22" viewBox="0 0 22 22" fill="#f8f4fa" stroke="currentColor" strokeWidth="1.300">
                  <path d="M1 1h20v20H1zM11 1v20M1 11h20" strokeDasharray="1.500 1.500" />
                  <path d="M0 21h22" />
                </svg>
              </Tool>
              <Tool $w={28} aria-label="Border options"><Chev s={8} /></Tool>
            </ToolRow>
          </GroupBody>
          <Foot>Paragraph</Foot>
        </Group>

        <Group>
          <GroupBody>
            <Gallery>
              <Cards>
                <Card $size={18} $dark>Normal</Card>
                <Card $size={18} $dark>No Spacing</Card>
                <Card $size={29} $serif>Heading 1</Card>
                <Card $size={23} $serif>Heading 2</Card>
                <Card $size={51} $serif $dark>Title</Card>
              </Cards>
              <GalleryScroll>
                <ScrollStep aria-label="Previous styles"><Tri up w={8} /></ScrollStep>
                <ScrollStep aria-label="Next styles"><Tri w={8} /></ScrollStep>
                <ScrollStep aria-label="More styles">
                  <svg width="9" height="8" viewBox="0 0 9 8" fill="currentColor"><path d="M0 0h9v2H0zM0 4h9L4.500 8z" /></svg>
                </ScrollStep>
              </GalleryScroll>
            </Gallery>
          </GroupBody>
          <Foot>Styles</Foot>
        </Group>

        <Group $width={128}>
          <GroupBody $pad="0 0 0 17px">
            <EditRow>
              <svg width="20" height="20" viewBox="0 0 20 20" fill="none" stroke="#a19fa1" strokeWidth="2">
                <circle cx="12" cy="7" r="5.800" />
                <path d="M8 11.500L1.500 18" strokeWidth="3" />
              </svg>
              <EditText $w={50}>Find</EditText>
              <Chev s={8} />
            </EditRow>
            <EditRow>
              <SwapGlyph>
                <SwapLine>ab</SwapLine>
                <SwapLine $in>ac</SwapLine>
              </SwapGlyph>
              <EditText>Replace</EditText>
            </EditRow>
            <EditRow>
              <svg width="20" height="22" viewBox="0 0 20 22" fill="none" stroke="#a19fa1" strokeWidth="1.300">
                <path d="M5 1v17l4-4 3 7 3-1-3-7h5z" />
              </svg>
              <EditText $w={53}>Select</EditText>
              <Chev s={8} />
            </EditRow>
          </GroupBody>
          <GroupFoot>
            <GroupLabel>Editing</GroupLabel>
          </GroupFoot>
        </Group>
        <RibbonEnd>
          <button aria-label="Collapse ribbon">
            <svg width="20" height="12" viewBox="0 0 20 12" fill="none" stroke="currentColor" strokeWidth="1.600">
              <path d="M1 1l9 9.500L19 1" />
            </svg>
          </button>
        </RibbonEnd>
      </Ribbon>

      <Notice>
        <svg width="32" height="32" viewBox="0 0 32 32">
          <circle cx="16" cy="16" r="16" fill="#4c82b8" />
          <circle cx="16.500" cy="7.500" r="2.500" fill="#fff" />
          <path d="M13 12.500h5.500V25H20v2h-7v-2h1.500V14.500H13z" fill="#fff" />
        </svg>
        <NoticeTitle>NOTICE</NoticeTitle>
        <NoticeText>Most features are disabled because your Office product is inactive. To use for free, sign in and use the Web version.</NoticeText>
        <NoticeButton><u>A</u>ctivate</NoticeButton>
        <NoticeButton>Use free at Office.com</NoticeButton>
        <NoticeClose aria-label="Dismiss">
          <svg width="14" height="13" viewBox="0 0 14 13" stroke="currentColor" strokeWidth="2.200"><path d="M1 1l12 11M13 1L1 12" /></svg>
        </NoticeClose>
      </Notice>

      <Workspace>
        <Canvas>
          <Sheet>
            <Picture>
              <Browser>
                <BrowserTitle>
                  <svg width="13" height="13" viewBox="0 0 13 13">
                    <path d="M0 0h13v13H0z" fill="#fff" />
                    <path d="M7 1H5M3 2L1.500 4" stroke="#e8a33a" strokeWidth="1.600" />
                    <path d="M1 6v2M2 10l1.500 1.500" stroke="#3a7d5a" strokeWidth="1.600" />
                    <path d="M5 12h2M9 11.500h3" stroke="#c4262e" strokeWidth="2.200" />
                  </svg>
                  FUNDS.TRANSFER - Google Chrome
                </BrowserTitle>
                <AddressBar>
                  <svg width="14" height="12" viewBox="0 0 14 12">
                    <path d="M7 0l7 12H0z" fill="#2d444f" />
                    <path d="M7 4v4M7 9v1.500" stroke="#8bc1d8" strokeWidth="1.400" />
                  </svg>
                  <Secure>Not secure</Secure>
                  <Url><UrlHost>123.255.251.252</UrlHost>:9090/BrowserR13/servlet/BrowserServlet#1</Url>
                </AddressBar>
                <ActionPanel>
                  <ActionRow>
                    <Pill $w={38} aria-label="Commit"><Check /></Pill>
                    <Pill $w={38} $gap={3} aria-label="Validate"><Query>?</Query><Check /></Pill>
                    <Pill $w={38} aria-label="Hold">
                      <svg width="8" height="9" viewBox="0 0 8 9" fill="currentColor"><path d="M0 0h3v9H0zM5 0h3v9H5z" /></svg>
                    </Pill>
                    <Pill $w={38} $grey $gap={3} aria-label="Delete"><Cross /></Pill>
                    <Pill $w={38} $grey aria-label="Authorise"><Check /><Check /></Pill>
                    <Pill $w={38} $grey $gap={3} aria-label="Reverse"><Cross /><Check /></Pill>
                    <Pill $w={38} $grey $gap={5} aria-label="Next">
                      <svg width="6" height="9" viewBox="0 0 6 9" fill="currentColor"><path d="M0 0l6 4.500L0 9z" /></svg>
                    </Pill>
                    <Pill $w={19} aria-label="Up">
                      <svg width="10" height="10" viewBox="0 0 10 10" fill="currentColor"><path d="M5 0l5 5H7v5H3V5H0z" /></svg>
                    </Pill>
                    <svg width="15" height="15" viewBox="0 0 15 15" fill="none">
                      <circle cx="7.500" cy="7.500" r="5" stroke="#f2f2f2" strokeWidth="4" />
                      <circle cx="7.500" cy="7.500" r="5" stroke="#d9532c" strokeWidth="4" strokeDasharray="5 2.850" />
                      <circle cx="7.500" cy="7.500" r="7" stroke="#b9603f" strokeWidth=".8" />
                    </svg>
                    <Actions aria-label="More actions" defaultValue="more">
                      <option value="more">More Actions ...</option>
                    </Actions>
                    <Pill $w={19} $gap={3} aria-label="Go"><Check /></Pill>
                    <Pill $w={38} aria-label="Query"><Query>?</Query><Lens s={16} /></Pill>
                  </ActionRow>
                  <RecordRow>
                    <RecordType>FT CREATION</RecordType>
                    <RecordId>FT/14112/CSG2G</RecordId>
                    <span>(Model Bank R14.2)</span>
                  </RecordRow>
                </ActionPanel>
                <Overrides>
                  <AcceptLink href="#overrides">Accept Overrides</AcceptLink>
                  <WarnList>
                    {warnings.map((w) => (
                      <WarnItem key={w}><Warn />{w}</WarnItem>
                    ))}
                  </WarnList>
                </Overrides>
                <FormPanel>
                  <FormRows>
                    <FormRow>
                      <FieldLabel $w={102} htmlFor="txn-type">Transaction Type</FieldLabel>
                      <Cell $w={31}><Star>*</Star></Cell>
                      <Cell $w={271}>
                        <Field id="txn-type" $w={43} defaultValue="AC" />
                        <DownRound />
                        <LensRound />
                      </Cell>
                    </FormRow>
                    <AccountRow side="Debit" account="73571" amount="110,000.00" indent={124} />
                    <DateRow side="Debit" />
                    <AccountRow side="Credit" account="20761" amount="" indent={0} />
                    <DateRow side="Credit" />
                    <FormRow>
                      <FieldLabel $w={102} htmlFor="rate">Treasury Rate</FieldLabel>
                      <Cell $w={31}><RequiredDot /></Cell>
                      <Field id="rate" $w={111} />
                    </FormRow>
                  </FormRows>
                </FormPanel>
              </Browser>
            </Picture>
            <NoteText>Note: Now its shows an OVERRIDE message “You are</NoteText>
          </Sheet>
        </Canvas>
        <ScrollTrack>
          <TrackButton aria-label="Scroll up"><Tri up w={11} /></TrackButton>
          <TrackSpace />
          <Thumb />
          <TrackButton aria-label="Scroll down"><Tri w={11} /></TrackButton>
        </ScrollTrack>
      </Workspace>

      <StatusBar>
        <StatusItem>Page 12 of 12</StatusItem>
        <StatusItem>407 words</StatusItem>
        <StatusItem aria-label="Proofing">
          <svg width="22" height="18" viewBox="0 0 22 18" fill="none" stroke="#666" strokeWidth="1.300">
            <path d="M10 17V3L8 1H1v15h7l2 1 2-1h7v-2M10 3l2-2h7v3" />
            <path d="M13.500 5.500l7 7M20.500 5.500l-7 7" strokeWidth="2.200" />
          </svg>
        </StatusItem>
        <StatusItem>English (United States)</StatusItem>
        <StatusItem>
          <svg width="22" height="22" viewBox="0 0 22 22" fill="none" stroke="#444" strokeWidth="1.700">
            <path d="M9 1v11M5 8l4 4 4-4" />
            <path d="M5 3a8.500 8.500 0 0 0 0 15h5" strokeDasharray="4 1.500" />
            <path d="M13.500 10.500c0-4 6.500-4 6.500 0 0 3-3.500 3-3.500 6M16.500 19v2.500" strokeWidth="2.400" />
          </svg>
          Accessibility: Unavailable
        </StatusItem>
        <StatusRight>
          <ViewButton aria-label="Read mode">
            <svg width="19" height="19" viewBox="0 0 19 19" fill="none" stroke="currentColor" strokeWidth="1.200">
              <path d="M9.500 0v19M1 1h7l1.500 1.500L11 1h7.500v15.500H11L9.500 18 8 16.500H.5V1M3 5h4.500M3 8h4.500M3 11h4.500M3 14h4.500M12 5h4.500M12 8h4.500M12 11h4.500M12 14h4.500" />
            </svg>
          </ViewButton>
          <ViewButton $active aria-label="Print layout">
            <svg width="19" height="19" viewBox="0 0 19 19" fill="none" stroke="currentColor" strokeWidth="1.300">
              <path d="M.7.7h17.600v17.600H.7zM3.500 4.500h12M3.500 7.500h12M3.500 10.500h12M3.500 13.500h12" />
            </svg>
          </ViewButton>
          <ViewButton aria-label="Web layout">
            <svg width="20" height="19" viewBox="0 0 20 19" fill="none" stroke="currentColor" strokeWidth="1.300">
              <path d="M8 16.500H.7V.7h16.600V6M3 4h11M3 7h9M3 10h6M3 13h5" />
              <circle cx="14" cy="13" r="5.800" fill="#777" stroke="none" />
              <path d="M11 9.500l4 1-2 3-3-1zM16 14l2 1-1.500 2.500z" fill="#f3f3f3" stroke="none" />
            </svg>
          </ViewButton>
          <ZoomButton $l={7} aria-label="Zoom out">
            <svg width="13" height="13" viewBox="0 0 13 13" stroke="#444" strokeWidth="1.200"><path d="M0 6.500h13" /></svg>
          </ZoomButton>
          <ZoomSlider type="range" min={0} max={100} defaultValue={50} aria-label="Zoom" />
          <ZoomButton aria-label="Zoom in">
            <svg width="12" height="12" viewBox="0 0 12 12" stroke="#444" strokeWidth="1.200"><path d="M0 6h12M6 0v12" /></svg>
          </ZoomButton>
          <ZoomValue>100%</ZoomValue>
        </StatusRight>
      </StatusBar>

      <Taskbar>
        <Weather>
          <svg width="36" height="28" viewBox="0 0 36 28">
            <circle cx="26" cy="10" r="9.500" fill="#f9a20b" />
            <path d="M8 26a7 7 0 0 1-1-13 9.500 9.500 0 0 1 18-2 7.500 7.500 0 0 1 3 15z" fill="#bccdee" />
            <path d="M8 26.500a6.500 6.500 0 1 1 5-10c4 2 6 0 8-3 6-3 13 0 12.500 7a6.500 6.500 0 0 1-6.500 6z" fill="#d3dff2" />
          </svg>
          <span>
            35°C
            <Muted>Partly sunny</Muted>
          </span>
        </Weather>
        <Apps>
          {apps.map((a, i) => (
            <AppSlot key={i} $active={a.active} aria-label={a.name}>
              <AppIcon>{a.icon}</AppIcon>
              <Running $on={a.on} $active={a.active} />
            </AppSlot>
          ))}
        </Apps>
        <Tray>
          <TrayItem $l={28} aria-label="Hidden icons">
            <svg width="19" height="11" viewBox="0 0 19 11" fill="none" stroke="currentColor" strokeWidth="1.600"><path d="M1 10l8.500-8.500L18 10" /></svg>
          </TrayItem>
          <TrayItem $l={14} aria-label="OneDrive">
            <svg width="25" height="17" viewBox="0 0 25 17">
              <path d="M7 5a7 7 0 0 1 12-1l2 3-13 7z" fill="#0364b8" />
              <path d="M5 16A5.500 5.500 0 0 1 7 5l9 5-6 6z" fill="#0f7fdb" />
              <path d="M4 15L18 6.500a5 5 0 0 1 2 10H6z" fill="#28a8ea" />
            </svg>
          </TrayItem>
          <TrayItem $l={21}>ENG<br />IN</TrayItem>
          <TrayItem $l={28} aria-label="Wi-Fi">
            <svg width="24" height="18" viewBox="0 0 24 18" fill="none" stroke="currentColor" strokeWidth="1.700">
              <path d="M1 7a15.500 15.500 0 0 1 22 0" stroke="#b4bcc8" />
              <path d="M4 10a11.500 11.500 0 0 1 16 0M7.500 13a6.500 6.500 0 0 1 9 0" />
              <circle cx="12" cy="15.500" r="1.300" fill="currentColor" />
            </svg>
          </TrayItem>
          <TrayItem $l={12} aria-label="Volume">
            <svg width="24" height="20" viewBox="0 0 24 20" fill="none" stroke="currentColor" strokeWidth="1.500">
              <path d="M1 7h4l5-5v16l-5-5H1zM13 6.500a5 5 0 0 1 0 7M16.500 4a9 9 0 0 1 0 12M20 1.500a13 13 0 0 1 0 17" />
            </svg>
          </TrayItem>
          <TrayItem $l={12} aria-label="Battery">
            <svg width="24" height="16" viewBox="0 0 24 16" fill="none" stroke="currentColor" strokeWidth="1.700">
              <rect x="1" y="1" width="19" height="14" rx="3" />
              <path d="M3.500 4h3.500v8H3.500zM21 6h2v4h-2z" fill="currentColor" stroke="none" />
            </svg>
          </TrayItem>
          <Clock>14:22<br />09-08-2022</Clock>
        </Tray>
      </Taskbar>
    </Shell>
  );
}
